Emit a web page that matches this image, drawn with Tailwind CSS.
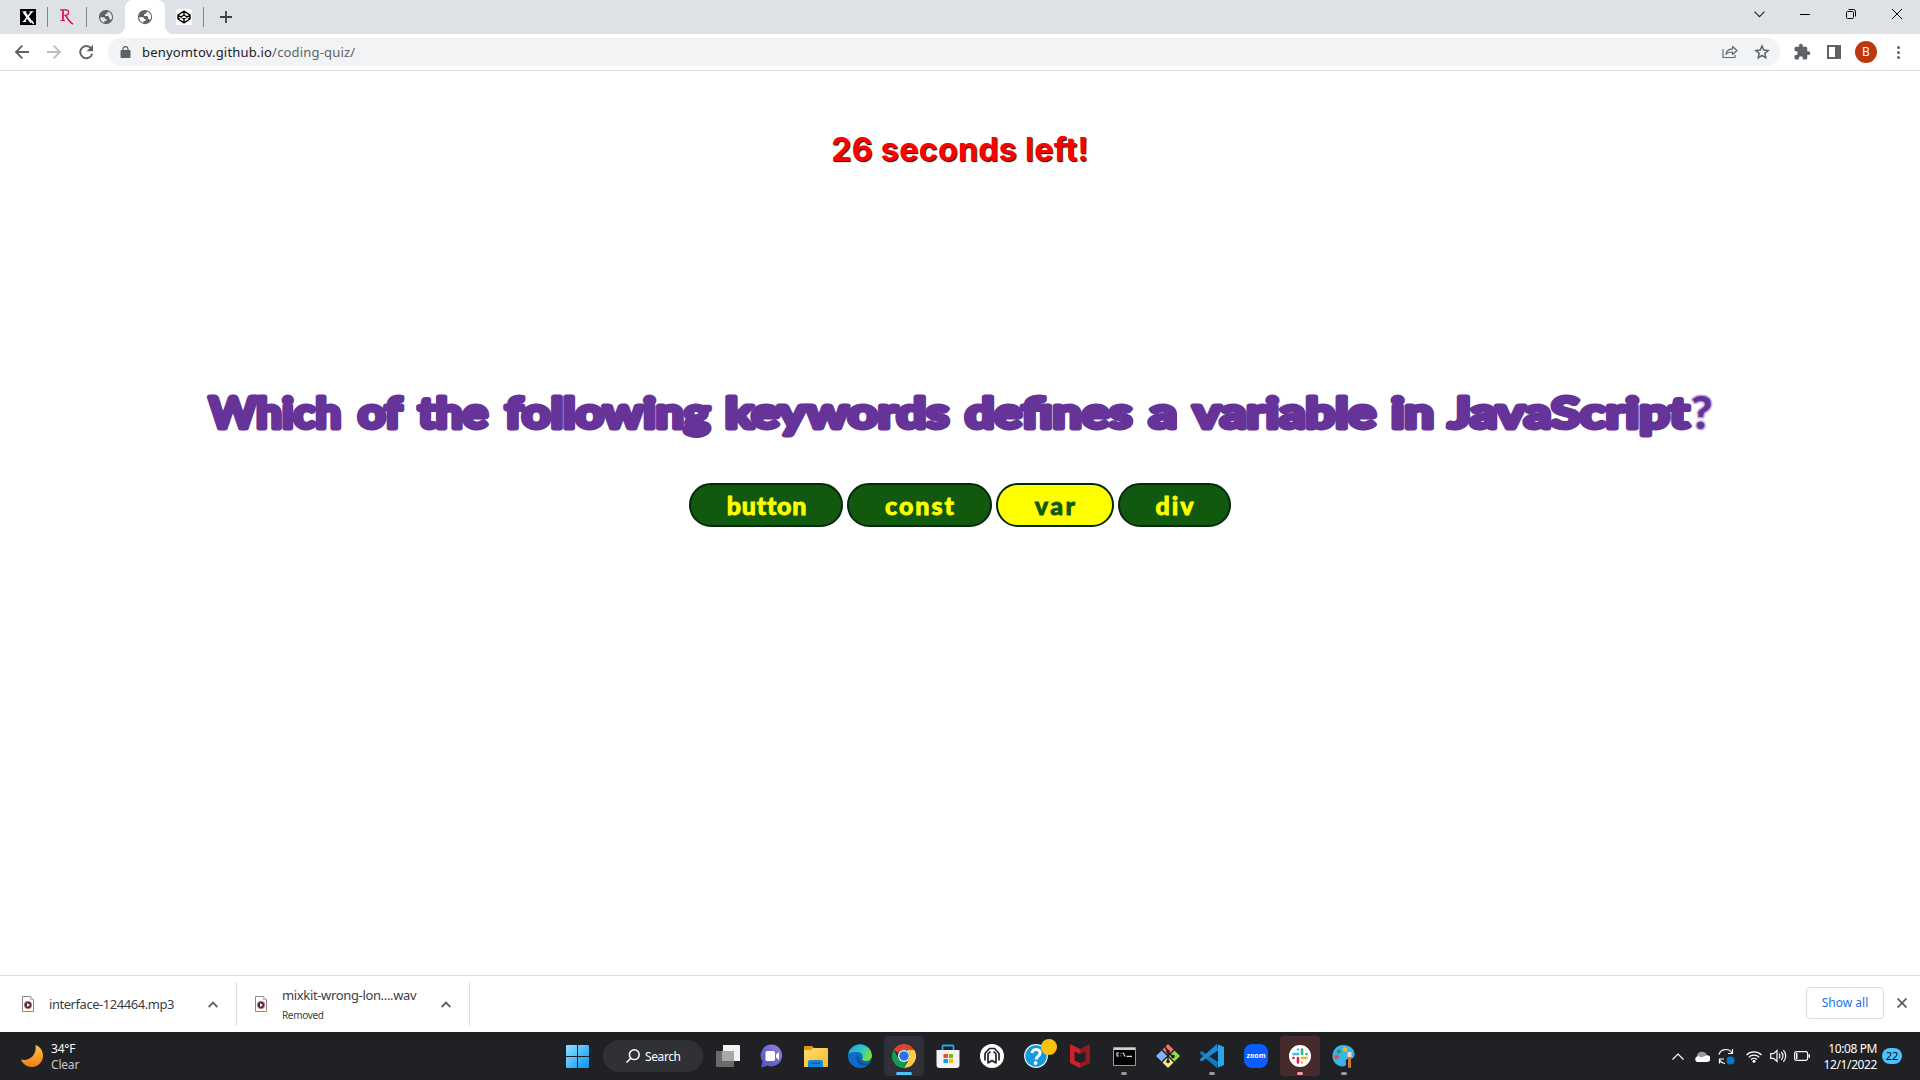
<!DOCTYPE html>
<html lang="en">
<head>
<meta charset="utf-8">
<title>Coding Quiz</title>
<script src="https://cdn.jsdelivr.net/npm/@tailwindcss/browser@4"></script>
</head>
<body class="w-[1920px] h-[1080px] overflow-hidden bg-white flex flex-col font-['Noto_Sans',sans-serif]">

<!-- Tab strip -->
<header class="h-[34px] shrink-0 bg-[#dee1e6] flex items-stretch justify-between">
  <div class="flex items-stretch pl-2">
    <div class="w-[39px] flex items-center justify-center">
      <svg class="w-4 h-4" viewBox="0 0 16 16"><path fill="#000" d="M0 0h16v16H0z"/><path fill="none" stroke="#fff" stroke-width="2.6" d="M4 3l7.5 10.5"/><path fill="none" stroke="#fff" stroke-width="1.5" d="M11.6 3L4 12.5M12 12l1.5 3"/><path stroke="#fff" d="M2.5 2.8h4M9.5 2.8h4M2.8 12.5h3.4"/></svg>
    </div>
    <div class="w-px h-5 bg-[#80868b] self-center"></div>
    <div class="w-[38px] flex items-center justify-center">
      <svg class="w-4 h-4" viewBox="0 0 16 16" fill="none" stroke="#d6104a"><path stroke-width="1.7" d="M4 1v10.5"/><path stroke-width="1.1" d="M1 .9h5.5c4.2 0 4.2 5.2 0 5.3H4.5M1.5 11.5H6"/><path stroke-width="1.5" d="M6.5 6.3c2.500 3.200 4 7.500 7.500 8.700"/></svg>
    </div>
    <div class="w-px h-5 bg-[#80868b] self-center"></div>
    <div class="w-[38px] flex items-center justify-center">
      <svg class="w-[18px] h-[18px]" viewBox="0 0 24 24" fill="#5f6368"><path d="M12 2.600a9.500 9.500 0 1 0 0 19 9.500 9.500 0 0 0 0-19zM4.200 12.200h4.300c1.600 0 2.400.8 2.400 2.400h1.800v2.700H9.900v2.400a7.800 7.800 0 0 1-5.700-7.500zm13.900 4.900c.7-1.500-.4-2.700-2-2.700v-1.600c0-1.400-1-2.200-2.700-2.200h-2.600V8.400c1.800 0 2.300-.7 2.300-2h1.500V4.500a7.800 7.800 0 0 1 3.500 12.600z"/></svg>
    </div>
    <div class="relative w-[40px] bg-white rounded-t-lg flex items-center justify-center">
      <svg class="absolute -left-2 bottom-0 w-2 h-2" viewBox="0 0 8 8"><path fill="#fff" d="M8 0v8H0a8 8 0 0 0 8-8z"/></svg>
      <svg class="absolute -right-2 bottom-0 w-2 h-2" viewBox="0 0 8 8"><path fill="#fff" d="M0 0v8h8a8 8 0 0 1-8-8z"/></svg>
      <svg class="w-[18px] h-[18px]" viewBox="0 0 24 24" fill="#5f6368"><path d="M12 2.600a9.500 9.500 0 1 0 0 19 9.500 9.500 0 0 0 0-19zM4.200 12.200h4.300c1.600 0 2.400.8 2.400 2.400h1.800v2.700H9.900v2.400a7.800 7.800 0 0 1-5.700-7.500zm13.900 4.900c.7-1.500-.4-2.700-2-2.700v-1.600c0-1.400-1-2.200-2.700-2.200h-2.600V8.400c1.800 0 2.300-.7 2.300-2h1.500V4.500a7.800 7.800 0 0 1 3.500 12.600z"/></svg>
    </div>
    <div class="w-[38px] flex items-center justify-center">
      <svg class="w-4 h-4" viewBox="0 0 16 16"><rect width="16" height="16" rx="1.500" fill="#fff"/><path fill="none" stroke="#000" stroke-width="1.400" stroke-linejoin="round" d="M8 2.200l6 3.800v4L8 13.800 2 10V6zM8 2.200V6M8 10v3.800M2 6l6 4 6-4M2 10l6-4 6 4"/></svg>
    </div>
    <div class="w-px h-5 bg-[#80868b] self-center"></div>
    <div class="w-[44px] flex items-center justify-center">
      <svg class="w-3 h-3" viewBox="0 0 12 12"><path stroke="#3c4043" stroke-width="1.800" d="M6 0v12M0 6h12"/></svg>
    </div>
  </div>
  <div class="flex h-7 items-center text-black">
    <div class="w-[46px] flex justify-center"><svg class="w-[11px] h-[7px]" viewBox="0 0 11 7"><path fill="none" stroke="#202124" stroke-width="1.100" d="M.5.700l5 5 5-5"/></svg></div>
    <div class="w-[46px] flex justify-center"><svg class="w-[10px] h-px" viewBox="0 0 10 1"><path fill="#000" d="M0 0h10v1H0z"/></svg></div>
    <div class="w-[46px] flex justify-center"><svg class="w-[10px] h-[10px]" viewBox="0 0 10 10" fill="none" stroke="#000"><rect x=".5" y="2.500" width="7" height="7" rx="1"/><path d="M2.500.5h5a2 2 0 0 1 2 2v5"/></svg></div>
    <div class="w-[46px] flex justify-center"><svg class="w-[10px] h-[10px]" viewBox="0 0 10 10"><path stroke="#000" d="M0 0l10 10M10 0L0 10"/></svg></div>
  </div>
</header>

<!-- Toolbar -->
<nav class="h-[37px] shrink-0 border-b border-[#dadce0] flex items-center pl-[14px]">
  <svg class="w-4 h-4" viewBox="0 0 16 16" fill="none" stroke="#5f6368" stroke-width="1.900"><path d="M15 8H2.500M8.300 1.700L2 8l6.300 6.300"/></svg>
  <svg class="w-4 h-4 ml-4" viewBox="0 0 16 16" fill="none" stroke="#babcbe" stroke-width="1.900"><path d="M1 8h12.500M7.700 1.700L14 8l-6.300 6.300"/></svg>
  <svg class="w-4 h-4 ml-4" viewBox="0 0 16 16"><path fill="none" stroke="#5f6368" stroke-width="1.900" d="M13 4.200A6.100 6.100 0 1 0 14.200 9.700"/><path fill="#5f6368" d="M15 .8v6.400H8.600z"/></svg>
  <div class="ml-[14px] w-[1672px] h-7 rounded-full bg-[#f1f3f4] flex items-center pl-3 pr-[10px]">
    <svg class="w-[11px] h-3" viewBox="0 0 11 12" ><path fill="#5f6368" d="M1.500 4h8a1 1 0 0 1 1 1v6a1 1 0 0 1-1 1h-8a1 1 0 0 1-1-1V5a1 1 0 0 1 1-1z"/><path fill="none" stroke="#5f6368" stroke-width="1.300" d="M3 4.500V3a2.500 2.400 0 0 1 5 0v1.500"/></svg>
    <span class="ml-[11px] text-[13px] leading-none tracking-[0.18px] text-[#5f6368] whitespace-nowrap"><span class="text-[#202124]">benyomtov.github.io</span>/coding-quiz/</span>
    <svg class="ml-auto w-4 h-4" viewBox="0 0 16 16" fill="none" stroke="#5f6368" stroke-width="1.100"><path d="M1 5v8.500h12V11"/><path stroke-linejoin="round" d="M10.500 2.500l4.500 4-4.500 4V8C7.500 8 5.500 8.500 4 10.500c.3-3 2.500-5.300 6.500-5.600z"/></svg>
    <svg class="ml-4 w-4 h-4" viewBox="0 0 16 16" fill="none" stroke="#5f6368" stroke-width="1.500"><path d="M8 2l1.700 4.100 4.500.4-3.400 2.900 1 4.400L8 11.500l-3.800 2.300 1-4.400-3.400-2.900 4.500-.4z"/></svg>
  </div>
  <svg class="ml-[13px] w-[18px] h-[18px]" viewBox="0 0 24 24" fill="#5f6368"><path d="M20.500 11H19V7a2 2 0 0 0-2-2h-4V3.500a2.500 2.500 0 0 0-5 0V5H4a2 2 0 0 0-2 2v3.800h1.500a2.700 2.700 0 0 1 0 5.400H2V20c0 1.100.9 2 2 2h3.800v-1.500a2.700 2.700 0 0 1 5.400 0V22H17a2 2 0 0 0 2-2v-4h1.500a2.500 2.500 0 0 0 0-5z"/></svg>
  <svg class="ml-4 w-[14px] h-[14px]" viewBox="0 0 14 14"><path fill="#5f6368" d="M0 0h14v14H0z"/><path fill="#fff" d="M2 2h6v10H2z"/></svg>
  <div class="ml-[14px] w-[22px] h-[22px] rounded-full bg-[#bf360c] text-white text-[12px] leading-none flex items-center justify-center">B</div>
  <svg class="ml-5 w-[3px] h-[13px]" viewBox="0 0 3 13" fill="#5f6368"><circle cx="1.500" cy="1.500" r="1.500"/><circle cx="1.500" cy="6.500" r="1.500"/><circle cx="1.500" cy="11.500" r="1.500"/></svg>
</nav>

<!-- Quiz -->
<main class="grow flex flex-col items-center">
  <h2 class="mt-[59px] h-10 leading-10 text-[32px] font-bold tracking-[0.4px] text-[red] font-['Inter',sans-serif] whitespace-nowrap [text-shadow:1px_1px_1px_#000]">26 seconds left!</h2>
  <h1 class="mt-[213px] h-[60px] w-[1506px]">
    <svg class="w-full h-full overflow-visible font-['Lato',sans-serif] font-bold text-[42px]" viewBox="0 0 1506 60" fill="#639" stroke="#639" stroke-width="4.800" stroke-linejoin="round">
      <text x="2" y="44.500" textLength="132" lengthAdjust="spacingAndGlyphs">Which</text>
      <text x="151" y="44.500" textLength="44" lengthAdjust="spacingAndGlyphs">of</text>
      <text x="211" y="44.500" textLength="70" lengthAdjust="spacingAndGlyphs">the</text>
      <text x="298" y="44.500" textLength="205" lengthAdjust="spacingAndGlyphs">following</text>
      <text x="518" y="44.500" textLength="224" lengthAdjust="spacingAndGlyphs">keywords</text>
      <text x="758" y="44.500" textLength="167" lengthAdjust="spacingAndGlyphs">defines</text>
      <text x="942" y="44.500" textLength="28" lengthAdjust="spacingAndGlyphs">a</text>
      <text x="986" y="44.500" textLength="183" lengthAdjust="spacingAndGlyphs">variable</text>
      <text x="1184" y="44.500" textLength="43" lengthAdjust="spacingAndGlyphs">in</text>
      <text x="1241" y="44.500" textLength="241" lengthAdjust="spacingAndGlyphs">JavaScript</text>
      <text class="font-black text-[46px]" x="1484" y="45.500" stroke="#c5aedd" stroke-width="3" paint-order="stroke">?</text>
    </svg>
  </h1>
  <div class="mt-[40px] flex gap-1 text-[25px] font-black font-['Lato',sans-serif] text-[yellow] [-webkit-text-stroke:0.8px_currentColor]">
    <button class="w-[154px] h-11 rounded-full border-2 border-[#06280f] bg-[#10590f] pl-0.5 pt-px tracking-[0.8px]">button</button>
    <button class="w-[145px] h-11 rounded-full border-2 border-[#06280f] bg-[#10590f] pl-0.5 pt-px tracking-[2px]">const</button>
    <button class="w-[118px] h-11 rounded-full border-2 border-[#06280f] bg-[yellow] text-[#10590f] pl-0.5 pt-px tracking-[2.5px]">var</button>
    <button class="w-[113px] h-11 rounded-full border-2 border-[#06280f] bg-[#10590f] pl-0.5 pt-px tracking-[2px]">div</button>
  </div>
</main>

<!-- Downloads -->
<section class="h-[57px] shrink-0 border-t border-[#dadce0] flex items-center text-[13px] leading-none text-[#3c4043]">
  <div class="w-[237px] h-11 border-r border-[#dadce0] flex items-center pl-[22px] pr-[18px]">
    <svg class="w-3 h-4" viewBox="0 0 12 16"><path fill="#fff" stroke="#8a8a8a" d="M.5.5h8l3 3v12H.5z"/><path fill="#ddd" stroke="#999" stroke-width=".6" d="M8.500.5v3h3"/><circle cx="6" cy="9" r="3.700" fill="#3b2a4a" stroke="#e8794a" stroke-width=".9"/><path fill="#fff" d="M5 7l3 2-3 2z"/></svg>
    <span class="ml-[15px] whitespace-nowrap tracking-[-0.45px]">interface-124464.mp3</span>
    <svg class="ml-auto w-[10px] h-[7px]" viewBox="0 0 10 7"><path fill="none" stroke="#5f6368" stroke-width="1.900" d="M.7 6L5 1.600 9.300 6"/></svg>
  </div>
  <div class="w-[233px] h-11 border-r border-[#dadce0] flex items-center pl-[18px] pr-[18px]">
    <svg class="w-3 h-4" viewBox="0 0 12 16"><path fill="#fff" stroke="#8a8a8a" d="M.5.5h8l3 3v12H.5z"/><path fill="#ddd" stroke="#999" stroke-width=".6" d="M8.500.5v3h3"/><circle cx="6" cy="9" r="3.700" fill="#3b2a4a" stroke="#e8794a" stroke-width=".9"/><path fill="#fff" d="M5 7l3 2-3 2z"/></svg>
    <div class="ml-[15px] flex flex-col gap-2 whitespace-nowrap items-start"><span class="tracking-[-0.35px]">mixkit-wrong-lon....wav</span><span class="text-[10px] tracking-[-0.35px]">Removed</span></div>
    <svg class="ml-auto w-[10px] h-[7px]" viewBox="0 0 10 7"><path fill="none" stroke="#5f6368" stroke-width="1.900" d="M.7 6L5 1.600 9.300 6"/></svg>
  </div>
  <div class="ml-auto mb-0.5 w-[78px] h-8 rounded border border-[#dadce0] text-[#1a73e8] text-[12px] flex items-center justify-center">Show all</div>
  <svg class="ml-[13px] mr-[13px] mb-0.5 w-[10px] h-[10px]" viewBox="0 0 10 10"><path stroke="#5f6368" stroke-width="1.900" d="M.5.5l9 9M9.500.5l-9 9"/></svg>
</section>

<!-- Taskbar -->
<footer class="h-12 shrink-0 bg-[#202124] flex items-center text-white text-[12px]">
  <div class="w-[557px] flex items-center pl-[21px]">
    <svg class="w-[22px] h-[22px]" viewBox="0 0 22 22"><defs><linearGradient id="moon" x1="0" y1="0" x2="0" y2="1"><stop offset="0" stop-color="#f8c63c"/><stop offset="1" stop-color="#f07d1a"/></linearGradient></defs><path fill="url(#moon)" d="M14.500 0C19 1.500 22 5.500 22 10.500A11 11 0 0 1 11 22C6 22 1.500 19 0 14.500c8 2 16-4 14.500-14.500z"/></svg>
    <div class="ml-2 pt-px leading-4 tracking-[-0.2px]">34°F<br><span class="text-[#c8c8c8]">Clear</span></div>
  </div>
  <div class="w-10 flex justify-center"><svg class="w-[23px] h-[23px]" viewBox="0 0 23 23"><defs><linearGradient id="win" x1="0" y1="0" x2="1" y2="1"><stop offset="0" stop-color="#8fe3ff"/><stop offset="1" stop-color="#0a93f5"/></linearGradient></defs><path fill="url(#win)" d="M1 0h10v11H0V1a1 1 0 0 1 1-1zM12 0h10a1 1 0 0 1 1 1v10H12zM0 12h11v11H1a1 1 0 0 1-1-1zM12 12h11v10a1 1 0 0 1-1 1H12z"/></svg></div>
  <div class="ml-[6px] w-[100px] h-8 rounded-full bg-[#303135] flex items-center pl-[23px]">
    <svg class="w-[14px] h-[14px]" viewBox="0 0 14 14" fill="none" stroke="#fff" stroke-width="1.500"><circle cx="8.300" cy="5.700" r="4.900"/><path d="M4.800 9.200L.5 13.500"/></svg>
    <span class="ml-[5px] pt-px tracking-[-0.4px]">Search</span>
  </div>
  <div class="ml-[5px] flex gap-1">
    <div class="size-10 flex items-center justify-center"><svg class="w-6 h-[22px]" viewBox="0 0 24 22"><path fill="#f3f3f3" d="M7 0h16a1 1 0 0 1 1 1v15H7z"/><path fill="#6b6b6b" d="M0 6h18v16H1a1 1 0 0 1-1-1z"/><path fill="#a8a8a8" d="M6 6h12v10H6z"/></svg></div>
    <div class="size-10 flex items-center justify-center"><svg class="size-6" viewBox="0 0 24 24"><defs><linearGradient id="chat" x1="1" y1="0" x2="0" y2="1"><stop offset="0" stop-color="#b07bd0"/><stop offset=".5" stop-color="#6a6ad0"/><stop offset="1" stop-color="#4f52c8"/></linearGradient></defs><path fill="url(#chat)" d="M12.500.5a11 11 0 1 1-5 21.300L1 23.500l1.500-6A11 11 0 0 1 12.500.5z"/><rect x="5.500" y="7" width="9.500" height="10" rx="1.500" fill="#fff"/><path fill="#fff" d="M16 10.500l3-2.500v8l-3-2.500z"/></svg></div>
    <div class="size-10 flex items-center justify-center"><svg class="size-6" viewBox="0 0 24 24"><defs><linearGradient id="fold" x1="0" y1="0" x2="1" y2="1"><stop offset="0" stop-color="#ffdd6e"/><stop offset="1" stop-color="#f8b92c"/></linearGradient></defs><path fill="#e19a10" d="M0 3a1 1 0 0 1 1-1h7l3 3v4H0z"/><path fill="url(#fold)" d="M0 6h7l2-2h14a1 1 0 0 1 1 1v17a1 1 0 0 1-1 1H0z"/><path fill="#1488d6" d="M4 23v-5a2 2 0 0 1 2-2h11a2 2 0 0 1 2 2v5z"/><path fill="#0b5fa8" d="M7 18.500h9v1.500H7z"/></svg></div>
    <div class="size-10 flex items-center justify-center"><svg class="size-6" viewBox="0 0 24 24"><defs><linearGradient id="edge" x1="0" y1="0" x2="1" y2=".4"><stop offset="0" stop-color="#1fa6e0"/><stop offset=".6" stop-color="#33c6c0"/><stop offset="1" stop-color="#6fe04a"/></linearGradient></defs><circle cx="12" cy="12" r="12" fill="#0f6cc4"/><path fill="#202124" d="M13 13.500c-.5 3 3 4.500 7 3.500l4-2v-2z"/><path fill="url(#edge)" d="M.2 10.500A12 12 0 0 1 24 11.500c0 4-3 5.500-6 5.500s-5-1-4-2.500c1.800-3-.2-6.500-4.500-6.500C5 8 1 8.500.2 10.500z"/><path fill="#0a4f9e" d="M9 12c-2 5 2.500 10 8 9.500 2-.2 4-1 5-3-6 2.500-12-.5-11.500-6.500z"/></svg></div>
    <div class="relative size-10 rounded bg-[#303137] flex items-center justify-center"><svg class="size-6" viewBox="0 0 24 24"><path fill="#db4437" d="M12 0a12 12 0 0 1 10.400 6H12a6 6 0 0 0-5.200 3L1.600 6A12 12 0 0 1 12 0z"/><path fill="#ffcd40" d="M22.400 6A12 12 0 0 1 12 24l5.200-9A6 6 0 0 0 16 7.500L15 6z"/><path fill="#0f9d58" d="M1.600 6l5.200 9a6 6 0 0 0 7.500 2.500L12 24A12 12 0 0 1 1.600 6z"/><circle cx="12" cy="12" r="6" fill="#fff"/><circle cx="12" cy="12" r="4.800" fill="#2b74e8"/></svg><div class="absolute bottom-px left-3 w-4 h-[3px] rounded-full bg-[#4cc2ff]"></div></div>
    <div class="size-10 flex items-center justify-center"><svg class="size-6" viewBox="0 0 24 24"><path fill="none" stroke="#22a4ec" stroke-width="1.800" d="M6.500 6V2.500a1 1 0 0 1 1-1h9a1 1 0 0 1 1 1V6"/><path fill="#f2f2f2" d="M.5 6h23v15a3 3 0 0 1-3 3h-17a3 3 0 0 1-3-3z"/><path fill="#f25022" d="M7.500 10H12v4H7.500z"/><path fill="#7fba00" d="M13 10h4v4h-4z"/><path fill="#00a4ef" d="M7.500 15H12v4H7.500z"/><path fill="#ffb900" d="M13 15h4v4h-4z"/></svg></div>
    <div class="size-10 flex items-center justify-center"><svg class="size-6" viewBox="0 0 24 24"><circle cx="12" cy="12" r="12" fill="#fff"/><path fill="none" stroke="#222" stroke-width="1.700" d="M5 16.500V9.500L9.500 4.500h5L19 9.500v7"/><path fill="none" stroke="#222" stroke-width="1.700" d="M8 19.500V10l2.500-2.500M16 19.500V10l-2.500-2.500M8 19l4-2.500 4 2.500"/></svg></div>
    <div class="relative size-10 flex items-center justify-center"><svg class="size-6" viewBox="0 0 24 24"><circle cx="12" cy="12" r="11.300" fill="#119bdc" stroke="#e8f6fd" stroke-width="1.200"/><path fill="none" stroke="#fff" stroke-width="3" d="M8 9c.5-5 9-4.500 8 .5-.5 2.500-3.500 2.700-4 6"/><circle cx="11.600" cy="19" r="1.900" fill="#fff"/></svg><div class="absolute -right-px top-[3px] size-4 rounded-full bg-[#ffc20e]"></div></div>
    <div class="size-10 flex items-center justify-center"><svg class="size-6" viewBox="0 0 24 24"><path fill="#d01f2a" d="M2 0l10 5v5L6.500 7.500v9L12 19v5L2 19z"/><path fill="#961820" d="M22 0L12 5v5l5.500-2.500v9L12 19v5l10-5z"/></svg></div>
    <div class="relative size-10 flex items-center justify-center"><svg class="w-[23px] h-[19px]" viewBox="0 0 23 19"><path fill="#000" stroke="#9a9a9a" d="M.5.5h22v18H.5z"/><path fill="#d0d0d0" d="M1 1h21v2H1z"/><path fill="none" stroke="#e0e0e0" stroke-width="1.200" d="M6 6H4v3h2M8 6v.8M8 8.500v.8M10 5.500l2 4M13.500 9.300H19"/></svg><div class="absolute bottom-px left-[17px] w-1.5 h-[3px] rounded-full bg-[#9a9a9d]"></div></div>
    <div class="size-10 flex items-center justify-center"><svg class="size-6" viewBox="0 0 24 24"><path fill="#f2706a" d="M12 0l5.500 5.500L12 11 6.500 5.500z"/><path fill="#80b3ff" d="M5.500 6.500L11 12l-5.500 5.500L0 12z"/><path fill="#8ed84e" d="M18.500 6.500L24 12l-5.500 5.500L13 12z"/><path fill="#ffe680" d="M12 13l5.500 5.500L12 24l-5.500-5.500z"/><path fill="none" stroke="#202124" stroke-width="1.500" d="M9 3l3 4v11M12 8l5 5"/><circle cx="12" cy="7.500" r="1.800" fill="#202124"/><circle cx="12" cy="17.500" r="1.800" fill="#202124"/><circle cx="17" cy="12.500" r="1.800" fill="#202124"/></svg></div>
    <div class="relative size-10 flex items-center justify-center"><svg class="size-6" viewBox="0 0 24 24"><path fill="#0f7cc4" d="M1.500 7L0 8.500v1L17 24l1-6z"/><path fill="#1b8ad6" d="M17 0l1 6.500L1.500 17.500 0 16v-1z"/><path fill="#2ba4ee" d="M17 0l7 3v18l-7 3c.8-.3 1-1 1-1.500V1.500c0-.5-.2-1.200-1-1.500z"/></svg><div class="absolute bottom-px left-[17px] w-1.5 h-[3px] rounded-full bg-[#9a9a9d]"></div></div>
    <div class="size-10 flex items-center justify-center"><div class="size-6 rounded-[8px] bg-[#0b5cff] flex items-center justify-center text-[7px] font-bold leading-none pb-px">zoom</div></div>
    <div class="relative size-10 rounded bg-[#472a2b] flex items-center justify-center"><svg class="size-[22px]" viewBox="0 0 22 22"><circle cx="11" cy="11" r="11" fill="#fff"/><g stroke-width="2.600" stroke-linecap="round"><path stroke="#36c5f0" d="M9 4.500v.01M4.500 9H9"/><path stroke="#2eb67d" d="M13 4.500V9M17.500 9v.01"/><path stroke="#ecb22e" d="M13 13h4.500M13 17.500v.01"/><path stroke="#e01e5a" d="M9 13v4.500M4.500 13v.01"/></g></svg><div class="absolute bottom-px left-[17px] w-1.5 h-[3px] rounded-full bg-[#ff99a4]"></div></div>
    <div class="relative size-10 flex items-center justify-center"><svg class="size-6" viewBox="0 0 24 24"><path fill="#3bb4ea" d="M11 1c7 0 11.500 4 11.500 9 0 5-4 5-6 5-3 0-3 2-2.500 4s-1 4-4 3.500C4 22 .5 17 .5 12S4 1 11 1z"/><circle cx="7" cy="7.500" r="2.200" fill="#2f9e44"/><circle cx="13" cy="5.500" r="2.200" fill="#f5b81e"/><circle cx="4.500" cy="13" r="2.200" fill="#e0532c"/><path fill="#e9dcc5" d="M15.500 8h4v5h-4z"/><path fill="#c77a2c" d="M16 13h3v9.500a1.500 1.500 0 0 1-3 0z"/></svg><div class="absolute bottom-px left-[17px] w-1.5 h-[3px] rounded-full bg-[#9a9a9d]"></div></div>
  </div>
  <div class="ml-auto flex items-center pr-[18px]">
    <svg class="w-3 h-[7px]" viewBox="0 0 12 7"><path fill="none" stroke="#fff" stroke-width="1.200" d="M.5 6.500L6 1l5.500 5.500"/></svg>
    <svg class="ml-[10px] w-4 h-[11px]" viewBox="0 0 16 11"><path fill="#9a9a9a" d="M3 6a5 4.500 0 0 1 10-1.500L9 8H2z"/><path fill="#fff" d="M3 11a3 3 0 0 1 0-5.500c2-.5 3 .5 4 1l6-2.300A3.400 3.400 0 0 1 13 11z"/></svg>
    <svg class="ml-2 w-[17px] h-[17px]" viewBox="0 0 17 17" fill="none" stroke="#fff" stroke-width="1.200"><path d="M1 6.500A7 6.500 0 0 1 14 5M14.500 1v4.500H10M1.500 15.500V11H6M1.500 11.500A7 6 0 0 0 7 15.500"/><circle cx="12.500" cy="12.500" r="4" fill="#0078d7" stroke="none"/></svg>
    <svg class="ml-[11px] w-4 h-[13px]" viewBox="0 0 16 13" fill="none" stroke="#fff" stroke-width="1.200"><path d="M.5 5a10.500 10.500 0 0 1 15 0M2.700 7.300a7.500 7.500 0 0 1 10.600 0M5 9.500a4.300 4.300 0 0 1 6 0"/><circle cx="8" cy="11.200" r="1.500" fill="#fff" stroke="none"/></svg>
    <svg class="ml-2 w-[17px] h-[14px]" viewBox="0 0 17 14" fill="none" stroke="#fff" stroke-width="1.200"><path d="M.7 4.700h2.800L7 1.500v11L3.500 9.300H.7zM9 4.800a3 3 0 0 1 0 4.400M11.200 3a5.500 5.500 0 0 1 0 8M13.400 1.200a8.500 8.500 0 0 1 0 11.600"/></svg>
    <svg class="ml-[7px] w-4 h-[10px]" viewBox="0 0 16 10"><rect x=".6" y=".6" width="13" height="8.800" rx="1.800" fill="none" stroke="#fff" stroke-width="1.200"/><path fill="#fff" d="M2 2h1.500v6H2zM14.500 3.300h1a.5.5 0 0 1 .5.500v2.400a.5.500 0 0 1-.5.500h-1z"/></svg>
    <div class="ml-[13px] w-[54px] flex flex-col items-end pt-px leading-4 whitespace-nowrap tracking-[-0.4px]"><span>10:08 PM</span><span>12/1/2022</span></div>
    <div class="ml-[5px] w-5 h-4 rounded-full bg-[#4cc2ff] text-black text-[11px] leading-4 text-center">22</div>
  </div>
</footer>
</body>
</html>
